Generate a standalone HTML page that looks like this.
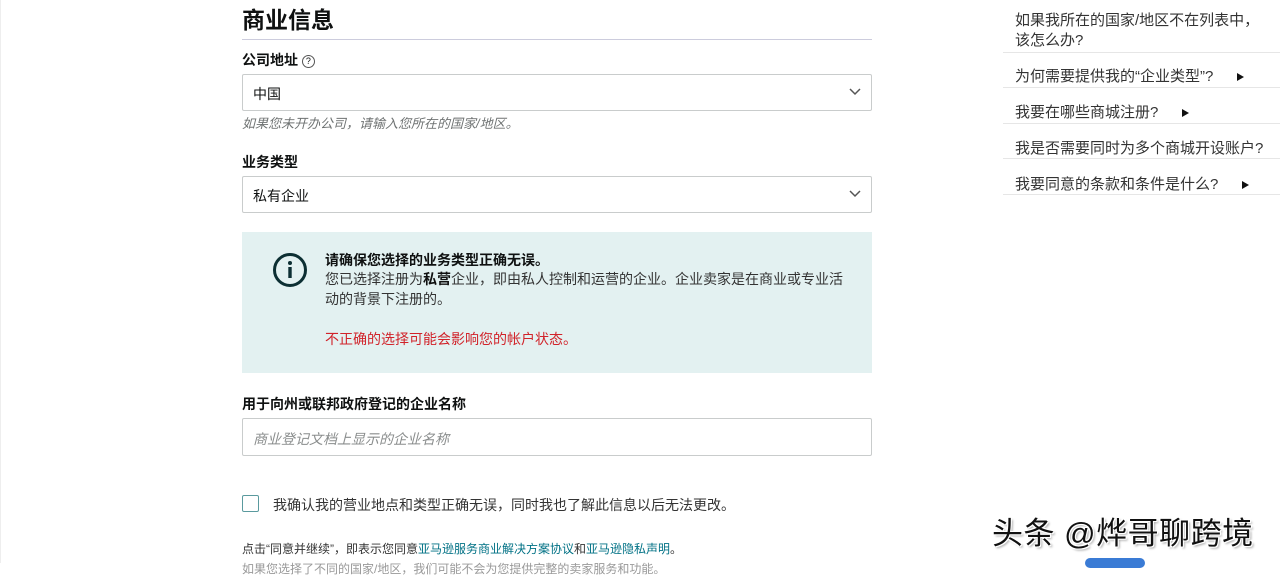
<!DOCTYPE html>
<html><head><meta charset="utf-8"><style>
body{margin:0;width:1280px;height:563px;overflow:hidden;background:#fff;font-family:"Liberation Sans","Noto Sans CJK SC",sans-serif;color:#0f1111;position:relative}
.a{position:absolute;white-space:nowrap}
.box{position:absolute;left:242px;width:628px;border:1px solid #c9cccc;border-radius:2px;background:#fff}
.chev{position:absolute;right:10px;top:13px}
.r{position:absolute;left:1015px;font-size:15px;color:#333;line-height:20px}
.hr{position:absolute;left:1003px;width:277px;height:1px;background:#e6e6e6}
.tri{display:inline-block;width:0;height:0;border-left:7px solid #111;border-top:4.5px solid transparent;border-bottom:4.5px solid transparent;margin-left:24px}
</style></head><body>
<div style="position:absolute;left:0;top:0;width:1px;height:563px;background:#eee"></div>
<div class="a" style="left:242px;top:1px;font-size:23px;font-weight:bold;">商业信息</div>
<div style="position:absolute;left:242px;top:39px;width:630px;height:1px;background:#ccd"></div>
<div class="a" style="left:242px;top:50px;font-size:14px;font-weight:bold;">公司地址 <span style="font-weight:normal;font-size:12px;display:inline-block;width:11px;height:11px;border:1px solid #555;border-radius:50%;text-align:center;line-height:11px;font-size:9px;vertical-align:1px">?</span></div>
<div class="box" style="top:74px;height:35px"><span class="a" style="left:10px;top:9px;font-size:14px">中国</span><svg class="chev" width="12" height="8"><path d="M1 1l5 5 5-5" fill="none" stroke="#555" stroke-width="1.5"/></svg></div>
<div class="a" style="left:242px;top:113px;font-size:13px;font-style:italic;color:#6f7373">如果您未开办公司，请输入您所在的国家/地区。</div>
<div class="a" style="left:242px;top:152px;font-size:14px;font-weight:bold;">业务类型</div>
<div class="box" style="top:176px;height:35px"><span class="a" style="left:10px;top:9px;font-size:14px">私有企业</span><svg class="chev" width="12" height="8"><path d="M1 1l5 5 5-5" fill="none" stroke="#555" stroke-width="1.5"/></svg></div>
<div style="position:absolute;left:242px;top:232px;width:630px;height:141px;background:#e3f1f1"></div>
<svg style="position:absolute;left:272px;top:252px" width="36" height="36"><circle cx="18" cy="18" r="15.5" fill="none" stroke="#0c2f33" stroke-width="3"/><circle cx="18" cy="11" r="2" fill="#0c2f33"/><rect x="16.3" y="15" width="3.4" height="11" fill="#0c2f33"/></svg>
<div class="a" style="left:325px;top:250px;font-size:14px;font-weight:bold;">请确保您选择的业务类型正确无误。</div>
<div class="a" style="left:325px;top:270px;font-size:14px;color:#333;line-height:19.5px">您已选择注册为<b style="color:#111">私营</b>企业，即由私人控制和运营的企业。企业卖家是在商业或专业活<br>动的背景下注册的。</div>
<div class="a" style="left:325px;top:329px;font-size:14px;color:#d1232a">不正确的选择可能会影响您的帐户状态。</div>
<div class="a" style="left:242px;top:394px;font-size:14px;font-weight:bold;">用于向州或联邦政府登记的企业名称</div>
<div class="box" style="top:418px;height:36px"><span class="a" style="left:10px;top:10px;font-size:14px;font-style:italic;color:#8a8d8d">商业登记文档上显示的企业名称</span></div>
<div style="position:absolute;left:242px;top:495px;width:15px;height:15px;border:1.5px solid #5a9a9e;border-radius:2px"></div>
<div class="a" style="left:273px;top:495px;font-size:14px;color:#333">我确认我的营业地点和类型正确无误，同时我也了解此信息以后无法更改。</div>
<div class="a" style="left:242px;top:540px;font-size:12px;color:#333">点击“同意并继续”，即表示您同意<span style="color:#007185">亚马逊服务商业解决方案协议</span>和<span style="color:#007185">亚马逊隐私声明</span>。</div>
<div class="a" style="left:242px;top:560px;font-size:12px;color:#999">如果您选择了不同的国家/地区，我们可能不会为您提供完整的卖家服务和功能。</div>
<div class="r" style="top:11px">如果我所在的国家/地区不在列表中，<br>该怎么办?</div>
<div class="hr" style="top:52px"></div>
<div class="r" style="top:67px">为何需要提供我的“企业类型”?<span class="tri"></span></div>
<div class="hr" style="top:87px"></div>
<div class="r" style="top:103px">我要在哪些商城注册?<span class="tri"></span></div>
<div class="hr" style="top:123px"></div>
<div class="r" style="top:139px">我是否需要同时为多个商城开设账户?</div>
<div class="hr" style="top:158px"></div>
<div class="r" style="top:175px">我要同意的条款和条件是什么?<span class="tri"></span></div>
<div class="hr" style="top:194px"></div>
<div class="a" style="left:992px;top:508px;font-size:31px;color:#111;letter-spacing:0.5px;text-shadow:1px 1px 0 #fff,-1px -1px 0 #fff,1px -1px 0 #fff,-1px 1px 0 #fff,2px 2px 2px #aaa">头条 @烨哥聊跨境</div>
<div style="position:absolute;left:1085px;top:558px;width:60px;height:10px;border-radius:5px;background:#3a7bd5"></div>
</body></html>
